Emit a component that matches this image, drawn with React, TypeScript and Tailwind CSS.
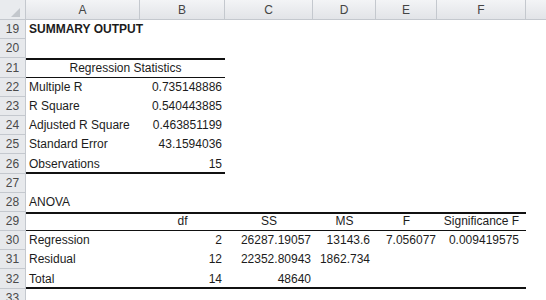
import React from "react"

const font = { fontFamily: '"Liberation Sans", Arial, sans-serif' }

// column widths: A..F, then the cut-off G
const colW = ["w-[114px]", "w-[85px]", "w-[88px]", "w-[63px]", "w-[61px]", "w-[89px]"]

type Cell = { t?: string; a?: "l" | "r" | "c"; b?: boolean; pr?: string; line?: string }

const TOP = "shadow-[inset_0_2px_0_#111]"
const TOPBOT = "shadow-[inset_0_2px_0_#111,inset_0_-1px_0_#111]"
const BOT2 = "shadow-[inset_0_-2px_0_#111]"

const rows: { n: number; h: string; cells?: Cell[]; merged?: string }[] = [
  { n: 19, h: "h-[19px]", cells: [{ t: "SUMMARY OUTPUT", b: true }] },
  { n: 20, h: "h-[19px]" },
  { n: 21, h: "h-[20px]", merged: "Regression Statistics" },
  { n: 22, h: "h-[19px]", cells: [{ t: "Multiple R" }, { t: "0.735148886", a: "r" }] },
  { n: 23, h: "h-[19px]", cells: [{ t: "R Square" }, { t: "0.540443885", a: "r" }] },
  { n: 24, h: "h-[19px]", cells: [{ t: "Adjusted R Square" }, { t: "0.463851199", a: "r" }] },
  { n: 25, h: "h-[19px]", cells: [{ t: "Standard Error" }, { t: "43.1594036", a: "r" }] },
  { n: 26, h: "h-[20px]", cells: [{ t: "Observations", line: BOT2 }, { t: "15", a: "r", line: BOT2 }] },
  { n: 27, h: "h-[19px]" },
  { n: 28, h: "h-[19px]", cells: [{ t: "ANOVA" }] },
  {
    n: 29,
    h: "h-[19px]",
    cells: [
      { line: TOPBOT },
      { t: "df", a: "c", line: TOPBOT },
      { t: "SS", a: "c", line: TOPBOT },
      { t: "MS", a: "c", line: TOPBOT },
      { t: "F", a: "c", line: TOPBOT },
      { t: "Significance F", a: "c", line: TOPBOT },
    ],
  },
  {
    n: 30,
    h: "h-[19px]",
    cells: [
      { t: "Regression" },
      { t: "2", a: "r" },
      { t: "26287.19057", a: "r", pr: "pr-[2px]" },
      { t: "13143.6", a: "r", pr: "pr-[6px]" },
      { t: "7.056077", a: "r", pr: "pr-[1px]" },
      { t: "0.009419575", a: "r", pr: "pr-[7px]" },
    ],
  },
  {
    n: 31,
    h: "h-[19px]",
    cells: [
      { t: "Residual" },
      { t: "12", a: "r" },
      { t: "22352.80943", a: "r", pr: "pr-[2px]" },
      { t: "1862.734", a: "r", pr: "pr-[6px]" },
    ],
  },
  {
    n: 32,
    h: "h-[20px]",
    cells: [
      { t: "Total", line: BOT2 },
      { t: "14", a: "r", line: BOT2 },
      { t: "48640", a: "r", pr: "pr-[2px]", line: BOT2 },
      { line: BOT2 },
      { line: BOT2 },
      { line: BOT2 },
    ],
  },
  { n: 33, h: "h-[19px]" },
]

function RowHead({ n }: { n: number }) {
  return (
    <div className="w-[26px] shrink-0 flex items-end justify-center bg-[#e7e9ec] border-r border-b border-[#c4c8ce] text-[#4a4a4a]">
      <span className="text-[12px] leading-[14px] pb-[2px]">{n}</span>
    </div>
  )
}

function Corner() {
  return (
    <div className="w-[26px] shrink-0 relative bg-[#e9ebee] border-r border-b border-[#c4c8ce]">
      <svg width="9" height="9" viewBox="0 0 9 9" className="absolute right-[5px] bottom-[2px]">
        <polygon points="9,0 9,9 0,9" fill="#c3c7cc" />
      </svg>
    </div>
  )
}

export default function App() {
  return (
    <div className="w-[546px] h-[300px] overflow-hidden bg-white text-[#1c1c1c]" style={font}>
      {/* column headers */}
      <div className="flex h-[20px] bg-gradient-to-b from-[#f3f4f6] to-[#e1e3e7]">
        <Corner />
        {["A", "B", "C", "D", "E", "F"].map((c, i) => (
          <div
            key={c}
            className={`${colW[i]} shrink-0 flex items-end justify-center border-r border-b border-[#c4c8ce] text-[#444]`}
          >
            <span className="text-[12px] leading-[14px] pb-[2px]">{c}</span>
          </div>
        ))}
        <div className="flex-1 border-b border-[#c4c8ce]" />
      </div>

      {rows.map((r) => (
        <div key={r.n} className={`flex ${r.h}`}>
          <RowHead n={r.n} />
          {r.merged ? (
            <div className={`w-[199px] shrink-0 flex items-end justify-center ${TOPBOT}`}>
              <span className="text-[12px] leading-[14px] pb-[3px]">{r.merged}</span>
            </div>
          ) : null}
          {!r.merged &&
            colW.map((w, i) => {
              const c = r.cells?.[i]
              const align = c?.a === "r" ? "justify-end" : c?.a === "c" ? "justify-center" : "justify-start"
              const pad = c?.a === "r" ? c.pr ?? "pr-[3px]" : c?.a === "c" ? "" : "pl-[3px]"
              return (
                <div key={i} className={`${w} shrink-0 flex items-end ${align} ${pad} ${c?.line ?? ""}`}>
                  {c?.t ? (
                    <span className={`text-[12px] leading-[14px] pb-[3px] whitespace-nowrap ${c.b ? "font-bold" : ""}`}>
                      {c.t}
                    </span>
                  ) : null}
                </div>
              )
            })}
          <div className="flex-1" />
        </div>
      ))}
    </div>
  )
}
